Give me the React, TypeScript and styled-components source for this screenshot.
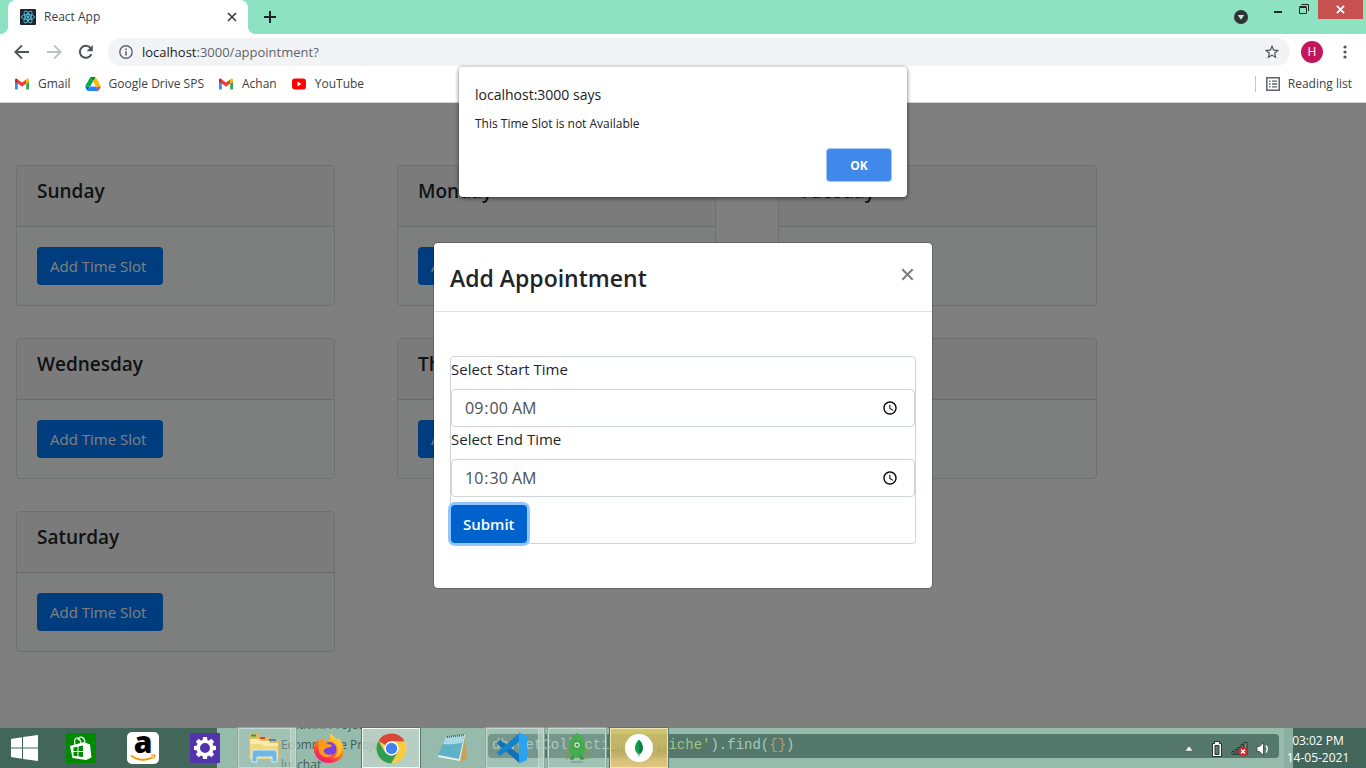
import React from 'react';
import styled, { createGlobalStyle } from 'styled-components';

const UI = '"Open Sans", "Noto Sans", sans-serif';

const GlobalStyle = createGlobalStyle`
  *, *::before, *::after { box-sizing: border-box; }
  body { margin: 0; font-family: ${UI}; color: #212529; background: #fff; }
  button, input { font-family: inherit; }
  h1, h2, p { margin: 0; }
`;

const Desktop = styled.div`
  position: relative;
  display: flex;
  flex-direction: column;
  min-height: 100vh;
  overflow: hidden;
`;

/* ---------- Browser chrome ---------- */

const TabStrip = styled.header`
  display: flex;
  align-items: stretch;
  height: 34px;
  padding-left: 8px;
  background: #8de3c1;
`;

const Tab = styled.div`
  position: relative;
  display: flex;
  align-items: center;
  width: 240px;
  padding: 0 10px 0 12px;
  background: #fff;
  border-radius: 8px 8px 0 0;
  font-size: 12px;
  line-height: 16px;
  color: #3c4043;
  &::before, &::after {
    content: '';
    position: absolute;
    bottom: 0;
    width: 8px;
    height: 8px;
  }
  &::before { right: 100%; background: radial-gradient(circle at 0 0, #8de3c1 8px, #fff 8px); }
  &::after { left: 100%; background: radial-gradient(circle at 100% 0, #8de3c1 8px, #fff 8px); }
`;

const TabTitle = styled.span`
  flex: 1;
  padding-left: 8px;
`;

const IconButton = styled.button`
  display: flex;
  align-items: center;
  justify-content: center;
  width: 32px;
  height: 28px;
  padding: 0;
  border: 0;
  background: none;
  color: #5f6368;
`;

const TabClose = styled(IconButton)`
  width: 12px;
  color: #3c4043;
`;

const NewTab = styled(IconButton)`
  height: 34px;
  margin-left: 6px;
  color: #202124;
`;

const WindowControls = styled.div`
  display: flex;
  align-items: flex-start;
  margin-left: auto;
`;

const TabSearch = styled(IconButton)`
  height: 34px;
  margin-right: 8px;
`;

const WindowButton = styled(IconButton)`
  width: 26px;
  height: 18px;
  color: #1c2b26;
`;

const WindowClose = styled(IconButton)`
  width: 45px;
  height: 19px;
  margin: 0 3px 0 1px;
  background: #c75050;
  color: #fff;
`;

const Toolbar = styled.div`
  display: flex;
  align-items: center;
  height: 36px;
  padding: 0 5px 0 6px;
`;

const AddressBar = styled.div`
  display: flex;
  flex: 1;
  align-items: center;
  height: 28px;
  margin-left: 6px;
  padding: 0 10px 0 11px;
  border-radius: 14px;
  background: #f1f3f4;
  color: #5f6368;
  font-size: 13px;
  line-height: 20px;
`;

const Address = styled.a`
  flex: 1;
  padding-left: 9px;
  color: #5f6368;
  text-decoration: none;
  b { font-weight: 400; color: #202124; }
`;

const Profile = styled.button`
  width: 22px;
  height: 22px;
  margin: 0 6px 0 11px;
  padding: 0;
  border: 0;
  border-radius: 50%;
  background: #c2185b;
  color: #fff;
  font-size: 12px;
  line-height: 22px;
`;

const Bookmarks = styled.nav`
  display: flex;
  align-items: center;
  height: 33px;
  padding: 0 14px 4px;
  gap: 14px;
  border-bottom: 1px solid #d0d2d3;
  color: #3c4043;
`;

const Bookmark = styled.a`
  display: flex;
  align-items: center;
  gap: 8px;
  color: inherit;
  font-size: 12px;
  line-height: 16px;
  text-decoration: none;
`;

const ReadingList = styled(Bookmark)`
  margin-left: auto;
  padding-left: 10px;
  border-left: 1px solid #c4c7cb;
`;

/* ---------- Page ---------- */

const Page = styled.main`
  position: relative;
  flex: 1;
  padding: 62px 16px;
  background: #fff;
`;

const DayGrid = styled.div`
  display: grid;
  grid-template-columns: repeat(3, minmax(0, 319px));
  gap: 32px 62px;
`;

const DayCard = styled.section`
  border: 1px solid #dfdfdf;
  border-radius: 4px;
  background: #f9fffc;
  overflow: hidden;
`;

const DayHeader = styled.div`
  height: 61px;
  padding: 12px 20px;
  border-bottom: 1px solid #d9d9d9;
  background: #f7f7f7;
`;

const DayName = styled.h2`
  font-size: 19px;
  font-weight: 600;
  line-height: 26px;
`;

const DayBody = styled.div`
  padding: 20px;
`;

const PrimaryButton = styled.button<{ $active?: boolean }>`
  display: block;
  height: 38px;
  padding: ${(p) => (p.$active ? '0 12px' : '0 17px 0 13px')};
  border: 0;
  border-radius: 4px;
  background: ${(p) => (p.$active ? '#0062cc' : '#007bff')};
  box-shadow: ${(p) => (p.$active ? '0 0 0 3px #92c5ff' : 'none')};
  color: #fff;
  font-size: 15px;
  font-weight: ${(p) => (p.$active ? 600 : 400)};
  line-height: 24px;
`;

const Backdrop = styled.div`
  position: absolute;
  inset: 0;
  display: flex;
  align-items: center;
  justify-content: center;
  background: rgba(0, 0, 0, 0.5);
`;

const Modal = styled.div`
  width: 500px;
  max-width: 100%;
  border: 1px solid rgba(0, 0, 0, 0.2);
  border-radius: 5px;
  background: #fff;
  background-clip: padding-box;
`;

const ModalHeader = styled.div`
  display: flex;
  align-items: flex-start;
  justify-content: space-between;
  padding: 16px;
  border-bottom: 1px solid #dee2e6;
`;

const ModalTitle = styled.h1`
  font-size: 23px;
  font-weight: 600;
  line-height: 38px;
  height: 36px;
`;

const ModalClose = styled.button`
  display: flex;
  padding: 9px 2px;
  border: 0;
  background: none;
  color: #7f7f7f;
`;

const ModalBody = styled.div`
  padding: 44px 16px;
`;

const TimeForm = styled.form`
  display: flex;
  flex-direction: column;
  align-items: flex-start;
  border: 1px solid #ced4da;
  border-radius: 4px;
`;

const FieldLabel = styled.label`
  padding-bottom: 8px;
  font-size: 15px;
  line-height: 24px;
`;

const TimeInput = styled.input`
  width: 100%;
  height: 38px;
  padding: 6px 12px;
  border: 1px solid #ced4da;
  border-radius: 4px;
  background: #fff;
  color: #495057;
  font-size: 16px;
  line-height: 24px;
`;

const Actions = styled.div`
  padding-top: 8px;
`;

/* ---------- Alert ---------- */

const AlertLayer = styled.div`
  position: absolute;
  top: 67px;
  left: 0;
  right: 0;
  display: flex;
  justify-content: center;
`;

const AlertBox = styled.div`
  display: flex;
  flex-direction: column;
  width: 448px;
  padding: 16px;
  border-radius: 4px;
  background: #fff;
  box-shadow: 0 1px 4px rgba(0, 0, 0, 0.6);
  color: #202124;
`;

const AlertTitle = styled.h1`
  font-size: 14px;
  font-weight: 400;
  line-height: 24px;
`;

const AlertText = styled.p`
  padding: 8px 0 16px;
  font-size: 12px;
  line-height: 18px;
`;

const OkButton = styled.button`
  align-self: flex-end;
  width: 64px;
  height: 32px;
  padding: 0;
  border: 0;
  border-radius: 3px;
  background: #4089eb;
  box-shadow: 0 0 0 1px #a3c6f7;
  color: #fff;
  font-size: 12px;
  font-weight: 700;
`;

/* ---------- Taskbar ---------- */

const Taskbar = styled.footer`
  position: relative;
  display: flex;
  height: 40px;
  background: linear-gradient(90deg, #42675a 217px, #96bbac 217px, #96bbac calc(100% - 82px), #8bb0a1 calc(100% - 82px), #8bb0a1 calc(100% - 73px), #42675a calc(100% - 73px));
`;

const Glass = styled.div`
  position: absolute;
  inset: 0;
  overflow: hidden;
`;

const TreeText = styled.div`
  position: absolute;
  top: -13px;
  left: 281px;
  color: #3f5c52;
  font-size: 12px;
  line-height: 20px;
`;

const CodeLine = styled.div`
  position: absolute;
  top: 6px;
  left: 488px;
  right: 87px;
  height: 24px;
  padding-left: 4px;
  border-radius: 4px;
  background: #54786c;
  color: #a5cabb;
  font: 14px/23px "Liberation Mono", monospace;
  em { font-style: normal; color: #a3c380; }
  i { font-style: normal; color: #b6a072; }
`;

const Launchers = styled.div`
  position: relative;
  display: flex;
  gap: 4px;
`;

const Pinned = styled.button`
  display: flex;
  align-items: center;
  justify-content: center;
  width: 58px;
  height: 40px;
  padding: 0;
  border: 0;
  background: none;
`;

const StartButton = styled(Pinned)`
  width: 48px;
`;

const Running = styled(Pinned)<{ $tone: 'plain' | 'front' | 'alert'; $stack?: boolean }>`
  border: 1px solid ${(p) => (p.$tone === 'front' ? '#f3f8f5' : p.$tone === 'alert' ? '#f0e3ad' : '#c4d8cf')};
  outline: 1px solid ${(p) => (p.$tone === 'plain' ? '#8aa99c' : '#58756a')};
  box-shadow: ${(p) => (p.$stack ? 'inset -4px 0 0 rgba(150, 187, 172, 0.4), inset -5px 0 0 rgba(220, 235, 228, 0.6)' : 'none')};
  padding-right: ${(p) => (p.$stack ? 7 : 0)}px;
  background: ${(p) =>
    p.$tone === 'front'
      ? 'rgba(190, 211, 201, 0.8)'
      : p.$tone === 'alert'
        ? 'linear-gradient(rgba(216, 200, 108, 0.9), rgba(200, 180, 95, 0.85) 55%, #e4c683)'
        : 'rgba(180, 206, 194, 0.35)'};
`;

const Tray = styled.div`
  position: relative;
  display: flex;
  align-items: center;
  gap: 7px;
  margin-left: auto;
`;

const TrayButton = styled.button`
  display: flex;
  padding: 2px 0 0;
  border: 0;
  background: none;
`;

const TrayExpander = styled(TrayButton)`
  margin-right: 9px;
`;

const Clock = styled.time`
  width: 80px;
  margin-left: 9px;
  padding: 2px 16px 0 0;
  display: flex;
  flex-direction: column;
  align-items: center;
  color: #fff;
  font-size: 12px;
  line-height: 17px;
  white-space: nowrap;
`;

/* ---------- Drawings ---------- */

const ReactMark = () => (
  <svg width="16" height="16" viewBox="0 0 16 16">
    <rect width="16" height="16" rx="1" fill="#20232a" />
    <g fill="none" stroke="#53c1de" strokeWidth="0.9">
      <ellipse cx="8" cy="8" rx="6.6" ry="2.5" />
      <ellipse cx="8" cy="8" rx="6.6" ry="2.5" transform="rotate(60 8 8)" />
      <ellipse cx="8" cy="8" rx="6.6" ry="2.5" transform="rotate(120 8 8)" />
    </g>
    <circle cx="8" cy="8" r="1.4" fill="#53c1de" />
  </svg>
);

const Cross = ({ size, stroke }: { size: number; stroke: number }) => (
  <svg width={size} height={size} viewBox="0 0 10 10" fill="none" stroke="currentColor" strokeWidth={stroke}>
    <path d="M1 1 9 9M9 1 1 9" />
  </svg>
);

const Arrow = ({ forward }: { forward?: boolean }) => (
  <svg width="16" height="16" viewBox="0 0 16 16" fill="none" stroke={forward ? '#bdc1c6' : '#4f5357'} strokeWidth="1.9">
    {forward ? <path d="M1 8h13M8 1.3 14.7 8 8 14.7" /> : <path d="M15 8H2M8 1.3 1.3 8 8 14.7" />}
  </svg>
);

const Reload = () => (
  <svg width="16" height="16" viewBox="0 0 16 16">
    <path d="M13.4 10.2A6 6 0 1 1 12.5 4" fill="none" stroke="#4f5357" strokeWidth="2" />
    <path d="M14.8 1v6.2H8.6z" fill="#4f5357" />
  </svg>
);

const Info = () => (
  <svg width="14" height="14" viewBox="0 0 14 14">
    <circle cx="7" cy="7" r="6.2" fill="none" stroke="#5f6368" strokeWidth="1.4" />
    <path d="M6.2 3.4h1.6v1.5H6.2zM6.2 6.2h1.6v4.4H6.2z" fill="#5f6368" />
  </svg>
);

const Star = () => (
  <svg width="16" height="16" viewBox="1 1 22 22" fill="#4f5357">
    <path d="M22 9.24l-7.19-.62L12 2 9.19 8.63 2 9.24l5.46 4.73L5.82 21 12 17.27 18.18 21l-1.63-7.03L22 9.24zM12 15.4l-3.76 2.27 1-4.28-3.32-2.88 4.38-.38L12 6.1l1.71 4.04 4.38.38-3.32 2.88 1 4.28L12 15.4z" />
  </svg>
);

const Dots = () => (
  <svg width="4" height="14" viewBox="0 0 4 14" fill="#4f5357">
    <circle cx="2" cy="2" r="1.6" />
    <circle cx="2" cy="7" r="1.6" />
    <circle cx="2" cy="12" r="1.6" />
  </svg>
);

const GmailMark = () => (
  <svg width="16" height="12" viewBox="0 0 16 12">
    <path d="M1 2v9.5h2.8V5z" fill="#4285f4" />
    <path d="M15 2v9.5h-2.8V5z" fill="#34a853" />
    <path d="M12.2 1.6 15 1.2V3.6l-2.8 2.2z" fill="#fbbc04" />
    <path d="M3.8 1.4 8 4.6l4.2-3.2v4.2L8 8.8 3.8 5.6z" fill="#ea4335" />
    <path d="M1 1.6C1.4.2 3-.1 3.8 1.4v4.2L1 3.6z" fill="#c5221f" />
    <path d="M15 3.6V1.8C14.6.3 13 0 12.2 1.4v4.2z" fill="#fbbc04" />
  </svg>
);

const DriveMark = () => (
  <svg width="16" height="14" viewBox="0 0 87.3 78">
    <path d="m6.6 66.85 3.85 6.65c.8 1.4 1.95 2.5 3.3 3.3L27.5 53H0c0 1.55.4 3.1 1.2 4.5z" fill="#0066da" />
    <path d="M43.65 25 29.9 1.2c-1.35.8-2.5 1.9-3.3 3.3L1.2 48.5A9 9 0 0 0 0 53h27.5z" fill="#00ac47" />
    <path d="M73.55 76.8c1.35-.8 2.5-1.9 3.3-3.3l9.25-16c.8-1.4 1.2-2.95 1.2-4.5H59.8z" fill="#ea4335" />
    <path d="M43.65 25 57.4 1.2C56.05.4 54.5 0 52.9 0H34.4c-1.6 0-3.15.45-4.5 1.2z" fill="#00832d" />
    <path d="M59.8 53H27.5L13.75 76.8c1.35.8 2.9 1.2 4.5 1.2h50.8c1.6 0 3.15-.45 4.5-1.2z" fill="#2684fc" />
    <path d="M73.4 26.5 60.7 4.5c-.8-1.4-1.95-2.5-3.3-3.3L43.65 25 59.8 53h27.45c0-1.55-.4-3.1-1.2-4.5z" fill="#ffba00" />
  </svg>
);

const YouTubeMark = () => (
  <svg width="16" height="12" viewBox="0 0 16 12">
    <rect x="1" y="0.5" width="14" height="11" rx="3" fill="#f00" />
    <path d="M6.5 3.6v4.8L10.4 6z" fill="#fff" />
  </svg>
);

const ListMark = () => (
  <svg width="14" height="14" viewBox="0 0 14 14">
    <path d="M.8.8h12.4v12.4H.8z" fill="none" stroke="#5f6368" strokeWidth="1.5" />
    <path d="M3 3.4h1.6v1.4H3zM3 6.3h1.6v1.4H3zM3 9.2h1.6v1.4H3zM6 3.4h5v1.4H6zM6 6.3h5v1.4H6zM6 9.2h5v1.4H6z" fill="#5f6368" />
  </svg>
);

const WindowsMark = () => (
  <svg width="27" height="26" viewBox="0 0 27 26" fill="#fff">
    <path d="M0 4 11 2.3v10.2H0zM12 2.1 27 0v12.5H12zM0 13.5h11v10.2L0 22zM12 13.5h15V26l-15-2.1z" />
  </svg>
);

const StoreMark = () => (
  <svg width="30" height="30" viewBox="0 0 30 30">
    <rect width="30" height="30" fill="#008a00" />
    <path d="M9 12C7 4 13 2 15 10M12 7c1-4 6-4 7 2" fill="none" stroke="#e9f5e9" strokeWidth="1.3" />
    <path d="M4 13 18 9l6 2.500 1.500 13L20 27 6.500 25z" fill="#fff" />
    <path d="M7.500 14.500l4-.8v4.300h-4zM12.500 13.500l4.500-.9V18h-4.500zM7.500 19h4v4.300l-4-.5zM12.500 19h4.500v5l-4.500-.6z" fill="#008a00" />
  </svg>
);

const AmazonMark = () => (
  <svg width="32" height="32" viewBox="0 0 32 32">
    <rect width="32" height="32" rx="5" fill="#fff" />
    <text x="16" y="21" textAnchor="middle" fontFamily="Open Sans" fontWeight="800" fontSize="30" fill="#000">a</text>
    <path d="M4 23.500c7 5.500 16 5.500 22 1.500" fill="none" stroke="#ff9900" strokeWidth="2" />
    <path d="M23 23c2-1 4-1 5.500-.2 0 2-.8 3.700-2.200 5 .4-1.500.9-2.700.6-3.800-1-.5-2.300-.5-3.900-1z" fill="#ff9900" />
  </svg>
);

const SettingsMark = () => (
  <svg width="30" height="30" viewBox="0 0 30 30">
    <rect width="30" height="30" fill="#5133ab" />
    <g fill="#fff">
      {[0, 45, 90, 135, 180, 225, 270, 315].map((a) => (
        <path key={a} d="M12.500 8 13 4h4l.5 4z" transform={`rotate(${a} 15 15)`} />
      ))}
    </g>
    <circle cx="15" cy="15" r="6.800" fill="none" stroke="#fff" strokeWidth="3.600" />
  </svg>
);

const FolderMark = () => (
  <svg width="34" height="30" viewBox="0 0 34 30">
    <path d="M2 3q0-2 2-2h8l2 3h8l2 2h5q3 0 3 3v17H2z" fill="#dfbd5c" />
    <path d="M4 1.500h5v2H4z" fill="#2aa147" />
    <path d="M13 4h5v2h-5z" fill="#d8402f" />
    <path d="M22 6h7v2h-7z" fill="#3f86c4" />
    <path d="M3 6h9l2 2h8l1 2h8v16H3z" fill="#f8eab0" />
    <path d="M3 11h12l2 2h14v13H3z" fill="#f0d980" />
    <path d="M5 29v-9q0-3 3-3h19q3 0 3 3v9h-5v-5H10v5z" fill="#70b8e0" stroke="#d0ecf9" />
  </svg>
);

const FirefoxMark = () => (
  <svg width="32" height="32" viewBox="0 0 32 32">
    <defs>
      <linearGradient id="fox" x1="0.8" y1="0" x2="0.2" y2="1">
        <stop offset="0" stopColor="#fff44f" />
        <stop offset="0.4" stopColor="#ff980e" />
        <stop offset="0.75" stopColor="#ff3647" />
        <stop offset="1" stopColor="#e31587" />
      </linearGradient>
    </defs>
    <path d="M18 1c1 3 4 4 6 7l1-2c4 4 6 8 6 12 0 8-7 13-15 13S1 25 1 17c0-4 2-7 4-10l1 3c1-2 2-3 4-4l1 3c3 0 5-1 6-3 0-2 0-3 1-5z" fill="url(#fox)" />
    <circle cx="16.500" cy="17" r="7" fill="#7542e5" />
    <path d="M6 10c3-1 6 0 9 2 2 0 4 1 4 2-2 2-6 1-8 4-1 4 5 6 9 4-3 5-13 4-14-3-1-3-1-6 0-9z" fill="#ff9a16" />
    <path d="M17 9c5 0 8 4 8 8s-2 8-6 9c7 0 10-5 10-10 0-4-3-8-6-9 0 1-3 1-6 2z" fill="#ffc42e" />
  </svg>
);

const ChromeMark = () => (
  <svg width="31" height="31" viewBox="0 0 32 32">
    <circle cx="16" cy="16" r="15.500" fill="#fbcb43" />
    <path d="M16 16 2.600 8.200A15.500 15.500 0 0 1 29.500 8.500H16z" fill="#d9463a" />
    <path d="M2.600 8.200A15.500 15.500 0 0 0 15.500 31.500L22.500 19.500 9.500 20z" fill="#2e9e54" />
    <circle cx="16" cy="16" r="7.400" fill="#fff" />
    <circle cx="16" cy="16" r="5.900" fill="#4384f0" />
  </svg>
);

const NotepadMark = () => (
  <svg width="32" height="30" viewBox="0 0 32 30">
    <path d="M27 3 31 25 24 29 21 27z" fill="#c2a45e" />
    <path d="M9 4 28 2 23 28 1 24z" fill="#e6f1f4" />
    <path d="M9 4 27 3 22 26 1 22z" fill="#5fb1c6" />
    <path d="M9 4 27 3 25 10Q12 12 6 11z" fill="#a9dae2" />
    <path d="M10 4 27 2" stroke="#4e5e60" strokeWidth="2" strokeDasharray="1 1" />
  </svg>
);

const CodeMark = () => (
  <svg width="32" height="32" viewBox="0 0 32 32">
    <path d="M1 10.500 4 8 24 23v8.500L1.500 12z" fill="#1070b8" />
    <path d="M1 21.500 4 24 24 9V.500L1.500 20z" fill="#1583cc" />
    <path d="M23 .500 31 4v24l-8 3.500z" fill="#2aa4f2" />
  </svg>
);

const RobotMark = () => (
  <svg width="24" height="32" viewBox="0 0 24 32">
    <path d="M5 16C0 18 0 23 2 26l2-3M19 16c5 2 5 7 3 10l-2-3" fill="none" stroke="#7d9a63" strokeWidth="2" />
    <path d="M12 1C7 4 4 9 4 15c0 4 2 8 4 10h8c2-2 4-6 4-10 0-6-3-11-8-14z" fill="#46ad4c" />
    <path d="m8 23-4 4 4 1 2-3zM16 23l4 4-4 1-2-3z" fill="#3c9845" />
    <circle cx="12" cy="13" r="3.500" fill="#cfeccf" stroke="#2f8240" />
    <circle cx="12" cy="13" r="1.500" fill="#3c9845" />
    <path d="M6 30h12" stroke="#718f83" />
  </svg>
);

const MongoMark = () => (
  <svg width="28" height="28" viewBox="0 0 28 28">
    <circle cx="14" cy="14" r="14" fill="#fff" />
    <path d="M14 5.500c-3 3-4 5.500-4 9 0 3 2 5 4 6.500z" fill="#10a04b" />
    <path d="M14 5.500c3 3 4 5.500 4 9 0 3-2 5-4 6.500z" fill="#0b7f3c" />
    <path d="M14 18v5" stroke="#8b9a90" strokeWidth="0.800" />
  </svg>
);

const days = ['Sunday', 'Monday', 'Tuesday', 'Wednesday', 'Thursday', 'Friday', 'Saturday'];

export default function App() {
  return (
    <Desktop>
      <GlobalStyle />
      <TabStrip>
        <Tab>
          <ReactMark />
          <TabTitle>React App</TabTitle>
          <TabClose aria-label="Close tab"><Cross size={10} stroke={1.7} /></TabClose>
        </Tab>
        <NewTab aria-label="New tab">
          <svg width="12" height="12" viewBox="0 0 12 12" stroke="currentColor" strokeWidth="2"><path d="M6 0v12M0 6h12" /></svg>
        </NewTab>
        <WindowControls>
          <TabSearch aria-label="Search tabs">
            <svg width="14" height="14" viewBox="0 0 14 14"><circle cx="7" cy="7" r="7" fill="#303437" /><path d="M3.800 5h6.400L7 9.700z" fill="#b9efda" /></svg>
          </TabSearch>
          <WindowButton aria-label="Minimize">
            <svg width="8" height="12" viewBox="0 0 8 12"><path d="M0 8h8v2H0z" fill="currentColor" /></svg>
          </WindowButton>
          <WindowButton aria-label="Restore">
            <svg width="10" height="10" viewBox="0 0 10 10" fill="none" stroke="currentColor"><path d="M.5 3.500h7v6h-7zM.5 2.500h7M2.500.5h7v6.500" /></svg>
          </WindowButton>
          <WindowClose aria-label="Close window"><Cross size={9} stroke={2} /></WindowClose>
        </WindowControls>
      </TabStrip>
      <Toolbar>
        <IconButton aria-label="Back"><Arrow /></IconButton>
        <IconButton aria-label="Forward"><Arrow forward /></IconButton>
        <IconButton aria-label="Reload"><Reload /></IconButton>
        <AddressBar>
          <Info />
          <Address href="#"><b>localhost</b>:3000/appointment?</Address>
          <Star />
        </AddressBar>
        <Profile>H</Profile>
        <IconButton aria-label="Menu"><Dots /></IconButton>
      </Toolbar>
      <Bookmarks>
        <Bookmark href="#"><GmailMark />Gmail</Bookmark>
        <Bookmark href="#"><DriveMark />Google Drive SPS</Bookmark>
        <Bookmark href="#"><GmailMark />Achan</Bookmark>
        <Bookmark href="#"><YouTubeMark />YouTube</Bookmark>
        <ReadingList href="#"><ListMark />Reading list</ReadingList>
      </Bookmarks>

      <Page>
        <DayGrid>
          {days.map((day) => (
            <DayCard key={day}>
              <DayHeader><DayName>{day}</DayName></DayHeader>
              <DayBody><PrimaryButton>Add Time Slot</PrimaryButton></DayBody>
            </DayCard>
          ))}
        </DayGrid>
        <Backdrop>
          <Modal role="dialog" aria-label="Add Appointment">
            <ModalHeader>
              <ModalTitle>Add Appointment</ModalTitle>
              <ModalClose aria-label="Close"><Cross size={13} stroke={1.6} /></ModalClose>
            </ModalHeader>
            <ModalBody>
              <TimeForm>
                <FieldLabel htmlFor="start">Select Start Time</FieldLabel>
                <TimeInput id="start" type="time" defaultValue="09:00" />
                <FieldLabel htmlFor="end">Select End Time</FieldLabel>
                <TimeInput id="end" type="time" defaultValue="10:30" />
                <Actions><PrimaryButton type="button" $active>Submit</PrimaryButton></Actions>
              </TimeForm>
            </ModalBody>
          </Modal>
        </Backdrop>
      </Page>

      <Taskbar>
        <Glass aria-hidden="true">
          <TreeText>Cultivini Project<br />Ecommerce Project<br />luschat</TreeText>
          <CodeLine>db.getCollection(<em>'myniche'</em>).find(<i>{'{}'}</i>)</CodeLine>
        </Glass>
        <Launchers>
          <StartButton aria-label="Start"><WindowsMark /></StartButton>
          <Pinned aria-label="Store"><StoreMark /></Pinned>
          <Pinned aria-label="Amazon"><AmazonMark /></Pinned>
          <Pinned aria-label="Settings"><SettingsMark /></Pinned>
          <Running $tone="plain" $stack aria-label="File Explorer"><FolderMark /></Running>
          <Pinned aria-label="Firefox"><FirefoxMark /></Pinned>
          <Running $tone="front" aria-label="Chrome"><ChromeMark /></Running>
          <Pinned aria-label="Notepad"><NotepadMark /></Pinned>
          <Running $tone="plain" $stack aria-label="Visual Studio Code"><CodeMark /></Running>
          <Running $tone="plain" aria-label="Robo 3T"><RobotMark /></Running>
          <Running $tone="alert" aria-label="MongoDB Compass"><MongoMark /></Running>
        </Launchers>
        <Tray>
          <TrayExpander aria-label="Show hidden icons">
            <svg width="10" height="6" viewBox="0 0 10 6"><path d="M5 0 9 5H1z" fill="#fff" stroke="#50695f" strokeWidth="0.600" /></svg>
          </TrayExpander>
          <TrayButton aria-label="Battery">
            <svg width="14" height="16" viewBox="0 0 14 16"><path d="M4.500.5h5v2h2v13h-9v-13h2z" fill="#fff" stroke="#26332e" /><path d="M5 4.500h4v9H5z" fill="#5b7d71" stroke="#26332e" /></svg>
          </TrayButton>
          <TrayButton aria-label="Network">
            <svg width="18" height="16" viewBox="0 0 18 16"><path d="M1 10.500h2v3H1zM4 8.500h2v5H4zM7 6.500h2v7H7zM10 3.500h2v10h-2zM13 1.500h3v12h-3z" fill="#80978e" stroke="#22332c" /><circle cx="12" cy="10.500" r="4.800" fill="#d3272d" /><path d="m10 8.500 4 4M14 8.500l-4 4" stroke="#fff" strokeWidth="1.500" /></svg>
          </TrayButton>
          <TrayButton aria-label="Volume">
            <svg width="14" height="14" viewBox="0 0 14 14"><path d="M1 4.500h2.500L7.500.5v13l-4-4H1z" fill="#fff" stroke="#2e463c" strokeWidth="0.800" /><path d="M10 3.500q2.500 3.500 0 7" fill="none" stroke="#fff" strokeWidth="1.400" /></svg>
          </TrayButton>
          <Clock><span>03:02 PM</span><span>14-05-2021</span></Clock>
        </Tray>
      </Taskbar>

      <AlertLayer>
        <AlertBox role="alertdialog" aria-label="localhost:3000 says">
          <AlertTitle>localhost:3000 says</AlertTitle>
          <AlertText>This Time Slot is not Available</AlertText>
          <OkButton>OK</OkButton>
        </AlertBox>
      </AlertLayer>
    </Desktop>
  );
}
